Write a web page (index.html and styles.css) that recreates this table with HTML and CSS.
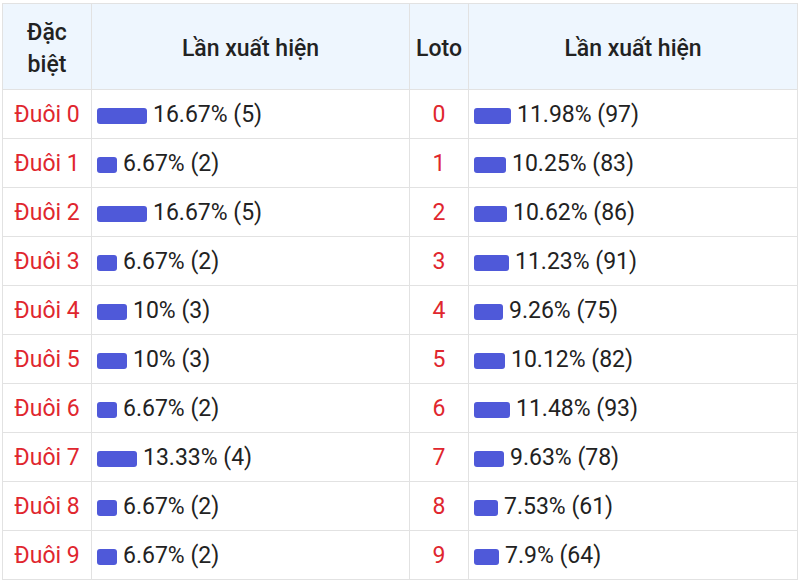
FILE: index.html
```html
<!DOCTYPE html>
<html lang="vi">
<head>
<meta charset="utf-8">
<link rel="stylesheet" href="styles.css">
</head>
<body>
<div class="wrap">
<table class="stats">
<colgroup>
<col class="c1"><col class="c2"><col class="c3"><col class="c4">
</colgroup>
<thead>
<tr><th>Đặc biệt</th><th>Lần xuất hiện</th><th>Loto</th><th>Lần xuất hiện</th></tr>
</thead>
<tbody>
<tr><td class="lbl">Đuôi 0</td><td class="val"><span class="bar" style="width:50px"></span>16.67% (5)</td><td class="lbl">0</td><td class="val"><span class="bar" style="width:37px"></span>11.98% (97)</td></tr>
<tr><td class="lbl">Đuôi 1</td><td class="val"><span class="bar" style="width:20px"></span>6.67% (2)</td><td class="lbl">1</td><td class="val"><span class="bar" style="width:32px"></span>10.25% (83)</td></tr>
<tr><td class="lbl">Đuôi 2</td><td class="val"><span class="bar" style="width:50px"></span>16.67% (5)</td><td class="lbl">2</td><td class="val"><span class="bar" style="width:33px"></span>10.62% (86)</td></tr>
<tr><td class="lbl">Đuôi 3</td><td class="val"><span class="bar" style="width:20px"></span>6.67% (2)</td><td class="lbl">3</td><td class="val"><span class="bar" style="width:35px"></span>11.23% (91)</td></tr>
<tr><td class="lbl">Đuôi 4</td><td class="val"><span class="bar" style="width:30px"></span>10% (3)</td><td class="lbl">4</td><td class="val"><span class="bar" style="width:29px"></span>9.26% (75)</td></tr>
<tr><td class="lbl">Đuôi 5</td><td class="val"><span class="bar" style="width:30px"></span>10% (3)</td><td class="lbl">5</td><td class="val"><span class="bar" style="width:31px"></span>10.12% (82)</td></tr>
<tr><td class="lbl">Đuôi 6</td><td class="val"><span class="bar" style="width:20px"></span>6.67% (2)</td><td class="lbl">6</td><td class="val"><span class="bar" style="width:36px"></span>11.48% (93)</td></tr>
<tr><td class="lbl">Đuôi 7</td><td class="val"><span class="bar" style="width:40px"></span>13.33% (4)</td><td class="lbl">7</td><td class="val"><span class="bar" style="width:30px"></span>9.63% (78)</td></tr>
<tr><td class="lbl">Đuôi 8</td><td class="val"><span class="bar" style="width:20px"></span>6.67% (2)</td><td class="lbl">8</td><td class="val"><span class="bar" style="width:24px"></span>7.53% (61)</td></tr>
<tr><td class="lbl">Đuôi 9</td><td class="val"><span class="bar" style="width:20px"></span>6.67% (2)</td><td class="lbl">9</td><td class="val"><span class="bar" style="width:25px"></span>7.9% (64)</td></tr>
</tbody>
</table>
</div>
</body>
</html>
```
FILE: styles.css
```css
html, body {
  margin: 0;
  padding: 0;
  background: #ffffff;
}
.wrap {
  padding: 3px 2px 0 2px;
}
.stats {
  border-collapse: collapse;
  table-layout: fixed;
  width: 795px;
  font-family: Roboto, "Liberation Sans", sans-serif;
  font-size: 23px;
  color: #222222;
}
.c1 { width: 89px; }
.c2 { width: 318px; }
.c3 { width: 59px; }
.c4 { width: 329px; }
.stats th,
.stats td {
  border: 1px solid #e2e2e2;
  line-height: 32px;
}
.stats th {
  background: #eef6fe;
  font-weight: 500;
  text-align: center;
  padding: 13px 4px 8px;
  height: 64px;
  box-sizing: content-box;
}
.stats td {
  padding: 9px 5px 7px 5px;
  height: 32px;
  box-sizing: content-box;
  white-space: nowrap;
}
.lbl {
  color: #e0262e;
  text-align: center;
}
.val {
  text-align: left;
}
.bar {
  display: inline-block;
  height: 16px;
  background: #4f59d9;
  border-radius: 3px;
  vertical-align: -2px;
  margin-right: 6px;
}
```
